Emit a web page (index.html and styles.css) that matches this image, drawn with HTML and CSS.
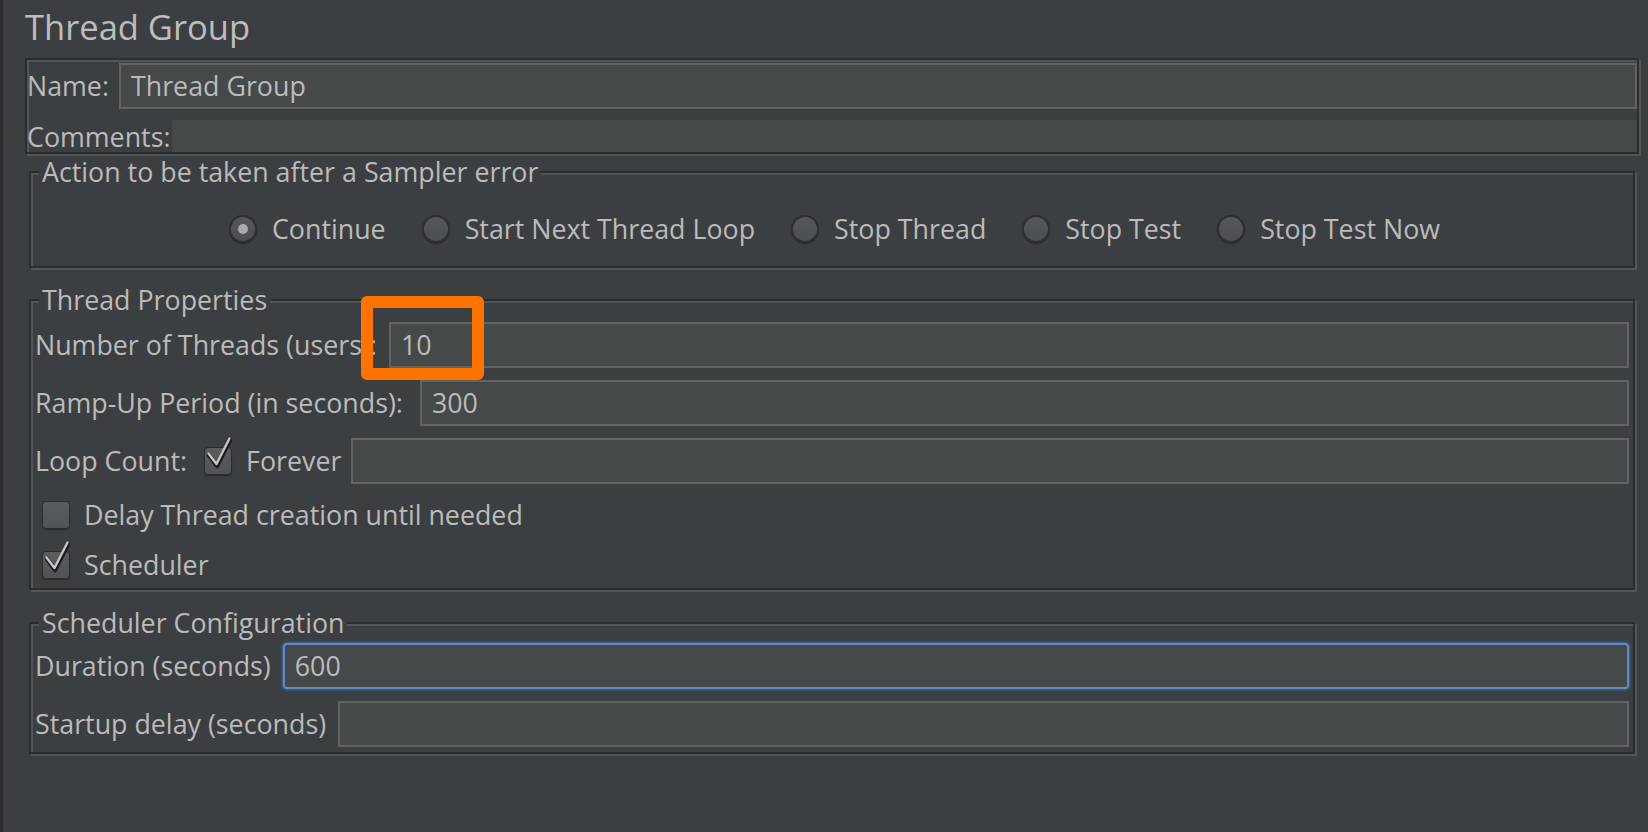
FILE: index.html
```html
<!DOCTYPE html>
<html lang="en">
<head>
<meta charset="utf-8">
<title>Thread Group</title>
<link rel="stylesheet" href="styles.css">
</head>
<body>
<div class="page">
  <h1 class="title">Thread Group</h1>

  <div class="name-panel">
    <div class="row row-name">
      <span class="label">Name:</span>
      <div class="field">Thread Group</div>
    </div>
    <div class="row row-comments">
      <span class="label">Comments:</span>
      <div class="comment-area"></div>
    </div>
  </div>

  <fieldset class="group group-action">
    <legend>Action to be taken after a Sampler error</legend>
    <div class="radios">
      <div class="radio-item"><span class="radio checked"></span><span>Continue</span></div>
      <div class="radio-item"><span class="radio"></span><span>Start Next Thread Loop</span></div>
      <div class="radio-item"><span class="radio"></span><span>Stop Thread</span></div>
      <div class="radio-item"><span class="radio"></span><span>Stop Test</span></div>
      <div class="radio-item"><span class="radio"></span><span>Stop Test Now</span></div>
    </div>
  </fieldset>

  <fieldset class="group group-thread">
    <legend>Thread Properties</legend>
    <div class="form-row">
      <span class="label">Number of Threads (users):</span>
      <div class="field field-annotated">10<span class="annotation"></span></div>
    </div>
    <div class="form-row form-row-wide">
      <span class="label">Ramp-Up Period (in seconds):</span>
      <div class="field">300</div>
    </div>
    <div class="form-row">
      <span class="label">Loop Count:</span>
      <span class="check-item loop-check">
        <span class="checkbox checked"><svg class="tick" viewBox="0 0 30 34" width="30" height="34"><polyline points="6,17 14,28 27,2" class="tick-dark"/><polyline points="5.5,15.5 13.5,26 26.5,0.5" class="tick-light"/></svg></span>
        <span>Forever</span>
      </span>
      <div class="field"></div>
    </div>
    <div class="check-row">
      <span class="check-item"><span class="checkbox"></span><span>Delay Thread creation until needed</span></span>
    </div>
    <div class="check-row">
      <span class="check-item"><span class="checkbox checked"><svg class="tick" viewBox="0 0 30 34" width="30" height="34"><polyline points="6,17 14,28 27,2" class="tick-dark"/><polyline points="5.5,15.5 13.5,26 26.5,0.5" class="tick-light"/></svg></span><span>Scheduler</span></span>
    </div>
  </fieldset>

  <fieldset class="group group-sched">
    <legend>Scheduler Configuration</legend>
    <div class="form-row">
      <span class="label">Duration (seconds)</span>
      <div class="field focused">600</div>
    </div>
    <div class="form-row">
      <span class="label">Startup delay (seconds)</span>
      <div class="field"></div>
    </div>
  </fieldset>
</div>
</body>
</html>
```

FILE: styles.css
```css
* { box-sizing: border-box; }

html, body {
  margin: 0;
  height: 100%;
}

body {
  background: #3c3f41;
  border-left: 3px solid #2b2d2f;
  font-family: "Open Sans", "Noto Sans", sans-serif;
  font-size: 26.8px;
  color: #bbbbbb;
  overflow: hidden;
}

.page {
  padding: 0 9px 0 22px;
}

.title {
  margin: 0 0 8px;
  padding-top: 4px;
  font-size: 34.5px;
  font-weight: normal;
  line-height: 46px;
  color: #bdbdbd;
}

/* etched panels */
.name-panel,
.group {
  border: 2px solid #2b2d2f;
  box-shadow: inset 2px 2px 0 #535658, 2px 2px 0 #535658;
}

.name-panel {
  display: flex;
  flex-direction: column;
  gap: 11px;
  padding: 3px 0 0 0;
}

.row {
  display: flex;
  align-items: center;
}

.row-name {
  height: 46px;
  gap: 10px;
}

.row-comments {
  height: 32px;
  gap: 2px;
  align-items: stretch;
}

.row-comments .label {
  display: flex;
  align-items: center;
  padding-top: 2px;
}

.label {
  line-height: 32px;
  white-space: nowrap;
}

.field {
  position: relative;
  flex: 1;
  height: 46px;
  border: 2px solid #626464;
  background: #45494a;
  padding: 0 10px;
  line-height: 42px;
  white-space: nowrap;
}

.comment-area {
  flex: 1;
  background: #45494a;
}

/* titled groups */
.group {
  margin: 17px 4px 0;
  padding: 0 4px;
  min-width: 0;
}

.group legend {
  margin-left: 4px;
  padding: 0 3px;
  line-height: 30px;
  background: #3c3f41;
}

.group-action {
  margin-top: 3px;
  padding-top: 27px;
  padding-bottom: 22px;
}

.group-thread {
  padding-top: 7px;
  padding-bottom: 4px;
}

.group-sched {
  margin-top: 18px;
  padding-top: 5px;
  padding-bottom: 5px;
}

.group-thread,
.group-sched {
  display: flex;
  flex-direction: column;
  gap: 12px;
}

/* radios */
.radios {
  display: flex;
  justify-content: center;
  align-items: center;
  gap: 36px;
  height: 30px;
  padding-left: 5px;
}

.radio-item {
  display: flex;
  align-items: center;
  gap: 15px;
  line-height: 30px;
  white-space: nowrap;
}

.radio {
  position: relative;
  width: 28px;
  height: 28px;
  border-radius: 50%;
  border: 2px solid #2d2f31;
  background: linear-gradient(#55585a, #4c4f51);
  box-shadow: 0 1px 1px rgba(0, 0, 0, 0.35);
}

.radio.checked::after {
  content: "";
  position: absolute;
  left: 7px;
  top: 7px;
  width: 10px;
  height: 10px;
  border-radius: 50%;
  background: #aaaaaa;
}

/* form rows */
.form-row {
  display: flex;
  align-items: center;
  gap: 12px;
  height: 46px;
}

.form-row-wide {
  gap: 17px;
}

.check-row {
  display: flex;
  align-items: center;
  height: 38px;
  padding-left: 7px;
}

.check-item {
  display: flex;
  align-items: center;
  gap: 14px;
  line-height: 32px;
  white-space: nowrap;
}

.loop-check {
  margin-left: 5px;
  margin-right: -2px;
}

.checkbox {
  position: relative;
  width: 28px;
  height: 28px;
  border-radius: 4px;
  border: 1px solid #2b2d2f;
  background: linear-gradient(#5a5d5f, #505355);
  box-shadow: 0 1px 1px rgba(0, 0, 0, 0.35);
  flex: none;
}

.tick {
  position: absolute;
  left: -2px;
  top: -10px;
  overflow: visible;
}

.tick-dark {
  fill: none;
  stroke: #1b1c1d;
  stroke-width: 4.5;
  stroke-linecap: round;
  stroke-linejoin: round;
}

.tick-light {
  fill: none;
  stroke: #c6c6c6;
  stroke-width: 2.4;
  stroke-linecap: round;
  stroke-linejoin: round;
}

.field.focused {
  border: 2px solid #5c8cc6;
  border-radius: 4px;
  box-shadow: 0 0 0 1px #3a5a80, 0 0 3px 1px rgba(74, 126, 186, 0.45);
}

.annotation {
  position: absolute;
  left: -30px;
  top: -28px;
  width: 123px;
  height: 84px;
  border: 12px solid #ff7400;
  border-radius: 6px;
}
```
